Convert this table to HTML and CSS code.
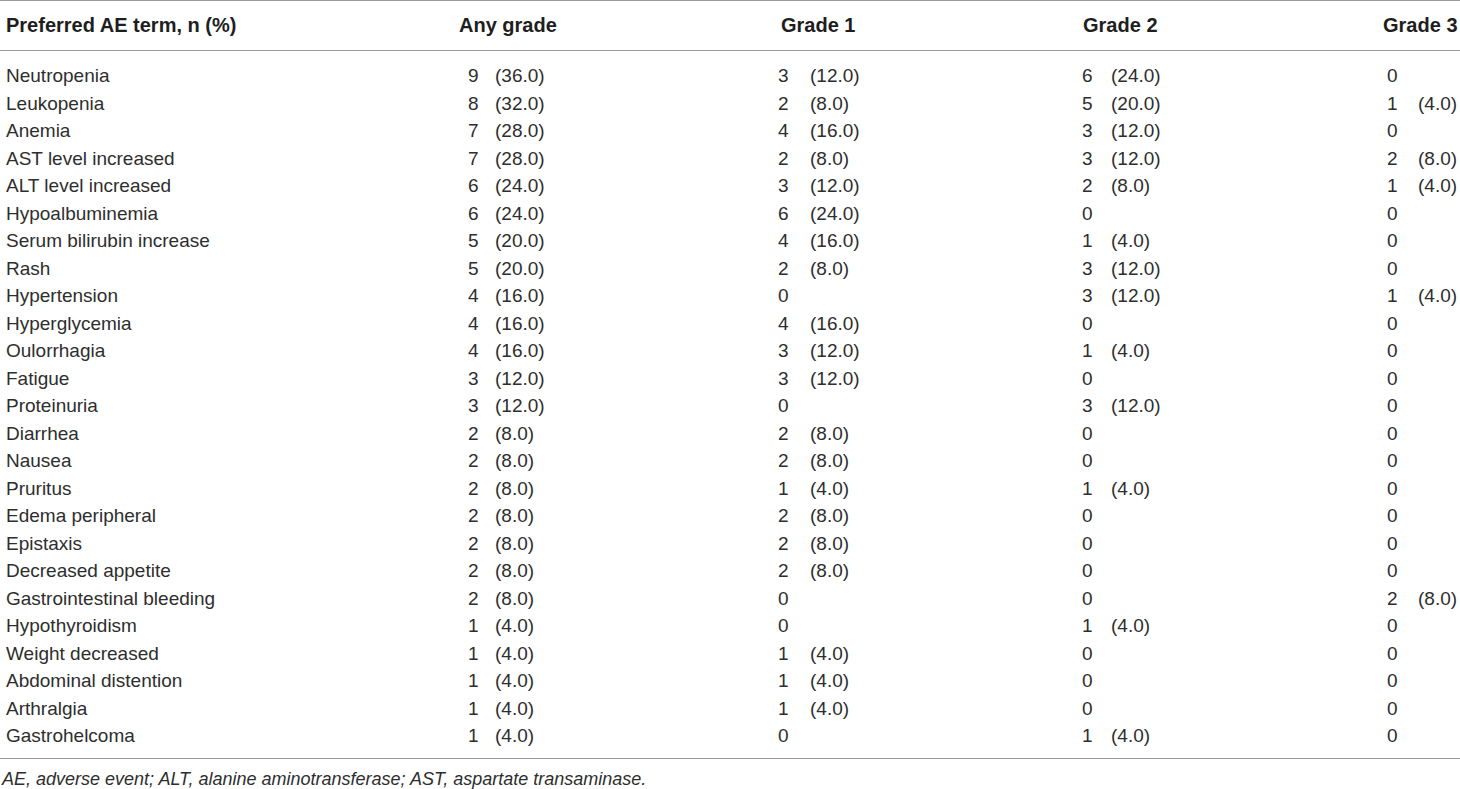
FILE: index.html
```html
<!DOCTYPE html>
<html lang="en">
<head>
<meta charset="utf-8">
<title>Adverse events</title>
<link rel="stylesheet" href="styles.css">
</head>
<body>
<div class="page">
<table class="ae">
<colgroup>
<col class="c-term"><col class="c-n0"><col class="c-p0"><col class="c-n1"><col class="c-p1"><col class="c-n2"><col class="c-p2"><col class="c-n3"><col class="c-p3">
</colgroup>
<thead>
<tr>
<th class="h-term">Preferred AE term, n (%)</th>
<th colspan="2" class="h-any">Any grade</th>
<th colspan="2" class="h-g1">Grade 1</th>
<th colspan="2" class="h-g2">Grade 2</th>
<th colspan="2" class="h-g3">Grade 3</th>
</tr>
</thead>
<tbody>
<tr><td>Neutropenia</td><td>9</td><td>(36.0)</td><td>3</td><td>(12.0)</td><td>6</td><td>(24.0)</td><td>0</td><td></td></tr>
<tr><td>Leukopenia</td><td>8</td><td>(32.0)</td><td>2</td><td>(8.0)</td><td>5</td><td>(20.0)</td><td>1</td><td>(4.0)</td></tr>
<tr><td>Anemia</td><td>7</td><td>(28.0)</td><td>4</td><td>(16.0)</td><td>3</td><td>(12.0)</td><td>0</td><td></td></tr>
<tr><td>AST level increased</td><td>7</td><td>(28.0)</td><td>2</td><td>(8.0)</td><td>3</td><td>(12.0)</td><td>2</td><td>(8.0)</td></tr>
<tr><td>ALT level increased</td><td>6</td><td>(24.0)</td><td>3</td><td>(12.0)</td><td>2</td><td>(8.0)</td><td>1</td><td>(4.0)</td></tr>
<tr><td>Hypoalbuminemia</td><td>6</td><td>(24.0)</td><td>6</td><td>(24.0)</td><td>0</td><td></td><td>0</td><td></td></tr>
<tr><td>Serum bilirubin increase</td><td>5</td><td>(20.0)</td><td>4</td><td>(16.0)</td><td>1</td><td>(4.0)</td><td>0</td><td></td></tr>
<tr><td>Rash</td><td>5</td><td>(20.0)</td><td>2</td><td>(8.0)</td><td>3</td><td>(12.0)</td><td>0</td><td></td></tr>
<tr><td>Hypertension</td><td>4</td><td>(16.0)</td><td>0</td><td></td><td>3</td><td>(12.0)</td><td>1</td><td>(4.0)</td></tr>
<tr><td>Hyperglycemia</td><td>4</td><td>(16.0)</td><td>4</td><td>(16.0)</td><td>0</td><td></td><td>0</td><td></td></tr>
<tr><td>Oulorrhagia</td><td>4</td><td>(16.0)</td><td>3</td><td>(12.0)</td><td>1</td><td>(4.0)</td><td>0</td><td></td></tr>
<tr><td>Fatigue</td><td>3</td><td>(12.0)</td><td>3</td><td>(12.0)</td><td>0</td><td></td><td>0</td><td></td></tr>
<tr><td>Proteinuria</td><td>3</td><td>(12.0)</td><td>0</td><td></td><td>3</td><td>(12.0)</td><td>0</td><td></td></tr>
<tr><td>Diarrhea</td><td>2</td><td>(8.0)</td><td>2</td><td>(8.0)</td><td>0</td><td></td><td>0</td><td></td></tr>
<tr><td>Nausea</td><td>2</td><td>(8.0)</td><td>2</td><td>(8.0)</td><td>0</td><td></td><td>0</td><td></td></tr>
<tr><td>Pruritus</td><td>2</td><td>(8.0)</td><td>1</td><td>(4.0)</td><td>1</td><td>(4.0)</td><td>0</td><td></td></tr>
<tr><td>Edema peripheral</td><td>2</td><td>(8.0)</td><td>2</td><td>(8.0)</td><td>0</td><td></td><td>0</td><td></td></tr>
<tr><td>Epistaxis</td><td>2</td><td>(8.0)</td><td>2</td><td>(8.0)</td><td>0</td><td></td><td>0</td><td></td></tr>
<tr><td>Decreased appetite</td><td>2</td><td>(8.0)</td><td>2</td><td>(8.0)</td><td>0</td><td></td><td>0</td><td></td></tr>
<tr><td>Gastrointestinal bleeding</td><td>2</td><td>(8.0)</td><td>0</td><td></td><td>0</td><td></td><td>2</td><td>(8.0)</td></tr>
<tr><td>Hypothyroidism</td><td>1</td><td>(4.0)</td><td>0</td><td></td><td>1</td><td>(4.0)</td><td>0</td><td></td></tr>
<tr><td>Weight decreased</td><td>1</td><td>(4.0)</td><td>1</td><td>(4.0)</td><td>0</td><td></td><td>0</td><td></td></tr>
<tr><td>Abdominal distention</td><td>1</td><td>(4.0)</td><td>1</td><td>(4.0)</td><td>0</td><td></td><td>0</td><td></td></tr>
<tr><td>Arthralgia</td><td>1</td><td>(4.0)</td><td>1</td><td>(4.0)</td><td>0</td><td></td><td>0</td><td></td></tr>
<tr><td>Gastrohelcoma</td><td>1</td><td>(4.0)</td><td>0</td><td></td><td>1</td><td>(4.0)</td><td>0</td><td></td></tr>
</tbody>
</table>
<p class="note">AE, adverse event; ALT, alanine aminotransferase; AST, aspartate transaminase.</p>
</div>
</body>
</html>
```

FILE: styles.css
```css
html, body {
  margin: 0;
  padding: 0;
  background: #ffffff;
}

.page {
  width: 1460px;
  font-family: "Liberation Sans", Arial, sans-serif;
  color: #2e2e2e;
}

.ae {
  width: 1460px;
  table-layout: fixed;
  border-collapse: collapse;
  border-top: 1px solid #9a9a9a;
  border-bottom: 1px solid #9a9a9a;
}

.c-term { width: 468px; }
.c-n0 { width: 27px; }
.c-p0 { width: 283px; }
.c-n1 { width: 32px; }
.c-p1 { width: 272px; }
.c-n2 { width: 29px; }
.c-p2 { width: 276px; }
.c-n3 { width: 31px; }
.c-p3 { width: 42px; }

.ae th {
  height: 49px;
  padding: 0;
  font-size: 20px;
  font-weight: bold;
  color: #1e1e1e;
  text-align: left;
  white-space: nowrap;
  vertical-align: middle;
  border-bottom: 1px solid #9a9a9a;
}

.ae th.h-term { padding-left: 6px; }
.ae th.h-any { text-indent: -9px; }
.ae th.h-g1 { text-indent: 3px; }
.ae th.h-g2 { text-indent: 1px; }
.ae th.h-g3 { text-indent: -4px; }

.ae td {
  padding: 0;
  height: 27.5px;
  line-height: 27.5px;
  font-size: 19px;
  white-space: nowrap;
  vertical-align: middle;
}

.ae td:first-child { padding-left: 6px; }

.ae tbody tr:first-child td { padding-top: 11px; }
.ae tbody tr:last-child td { padding-bottom: 8px; }

.note {
  margin: 0;
  padding: 7px 0 0 2px;
  font-size: 18px;
  line-height: 27px;
  font-style: italic;
  color: #2e2e2e;
}
```
